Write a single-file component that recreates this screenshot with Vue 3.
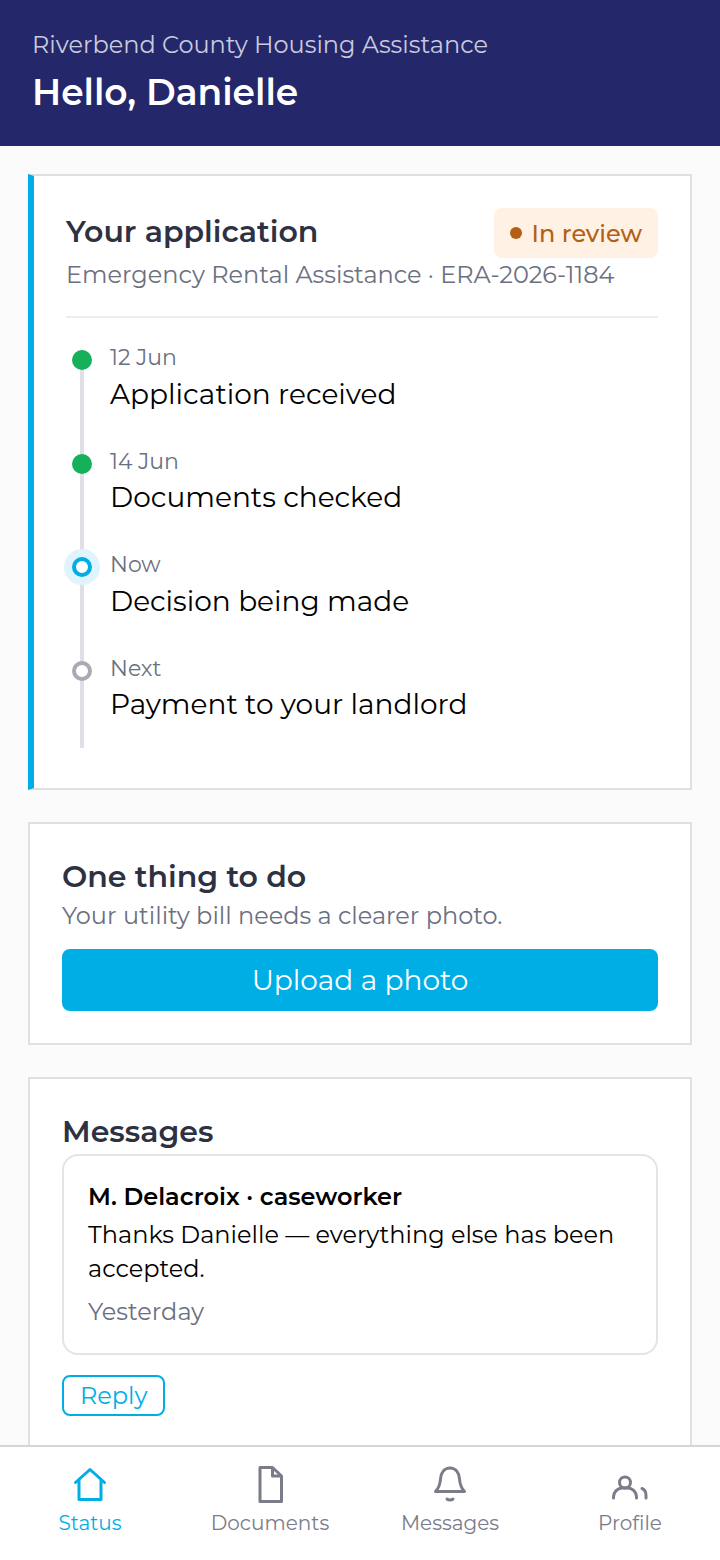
<template>
  <div class="screen">
    <header class="top">
      <p class="agency">Riverbend County Housing Assistance</p>
      <h1>Hello, Danielle</h1>
    </header>

    <main class="content">
      <section class="card card-app">
        <div class="app-head">
          <h2>Your application</h2>
          <span class="badge"><i></i>In review</span>
        </div>
        <p class="sub">Emergency Rental Assistance · ERA-2026-1184</p>
        <ol class="timeline">
          <li v-for="step in steps" :key="step.title" class="step">
            <span class="dot" :class="step.state"></span>
            <span class="when">{{ step.when }}</span>
            <span class="what">{{ step.title }}</span>
          </li>
        </ol>
      </section>

      <section class="card card-todo">
        <h2>One thing to do</h2>
        <p class="sub">Your utility bill needs a clearer photo.</p>
        <button class="primary">Upload a photo</button>
      </section>

      <section class="card card-msg">
        <h2>Messages</h2>
        <div class="message">
          <strong>M. Delacroix · caseworker</strong>
          <p>Thanks Danielle — everything else has been accepted.</p>
          <span>Yesterday</span>
        </div>
        <button class="reply">Reply</button>
      </section>
    </main>

    <nav class="tabs">
      <a class="tab active">
        <svg viewBox="0 0 36 36" fill="none" stroke="currentColor" stroke-width="3" stroke-linejoin="round" stroke-linecap="round">
          <path d="M3.500 16.500 18 3.500l14.500 13" />
          <path d="M7 14v19.500h22V14" />
        </svg>
        Status
      </a>
      <a class="tab">
        <svg viewBox="0 0 36 36" fill="none" stroke="currentColor" stroke-width="3" stroke-linejoin="round">
          <path d="M8 1.500h12.500l9 8.500v25.500H8z" />
          <path d="M20.500 1.500V10h9" />
        </svg>
        Documents
      </a>
      <a class="tab">
        <svg viewBox="0 0 36 36" fill="none" stroke="currentColor" stroke-width="3" stroke-linecap="round" stroke-linejoin="round">
          <path d="M3.500 25.500C7 22 8 19 8.500 13 9 6.500 12.500 2 18 2s9 4.500 9.500 11c.5 6 1.500 9 5 12.500z" />
          <path d="M15 33c1.500 1.300 4.500 1.300 6 0" />
        </svg>
        Messages
      </a>
      <a class="tab">
        <svg viewBox="0 0 36 36" fill="none" stroke="currentColor" stroke-width="3" stroke-linecap="round">
          <circle cx="13" cy="16.500" r="5.500" />
          <path d="M1.500 32v-1c0-5 4-9 9-9h5c5 0 9 4 9 9v1" />
          <path d="M30 22.500c2.800 1 4 4 4 7V32" />
        </svg>
        Profile
      </a>
    </nav>
  </div>
</template>

<script setup>
const steps = [
  { when: '12 Jun', title: 'Application received', state: 'done' },
  { when: '14 Jun', title: 'Documents checked', state: 'done' },
  { when: 'Now', title: 'Decision being made', state: 'now' },
  { when: 'Next', title: 'Payment to your landlord', state: 'next' }
]
</script>

<style>
html, body { margin: 0; }
</style>

<style scoped>
.screen {
  width: 720px;
  height: 1560px;
  display: flex;
  flex-direction: column;
  overflow: hidden;
  background: #fbfbfb;
  font-family: "Montserrat", "Inter", "Liberation Sans", sans-serif;
  color: #000;
}

.top {
  height: 146px;
  box-sizing: border-box;
  padding: 28px 32px 0;
  background: #24286b;
  color: #fff;
  flex: none;
}

.agency {
  margin: 0;
  font-size: 24px;
  line-height: 34px;
  color: #c9cade;
}

.top h1 {
  margin: 8px 0 0;
  font-size: 36px;
  line-height: 44px;
  font-weight: 600;
}

.content {
  flex: 1;
  min-height: 0;
  overflow: hidden;
  padding: 28px 28px 0;
  display: flex;
  flex-direction: column;
  gap: 32px;
}

.card {
  background: #fff;
  border: 2px solid #dfdfe5;
  box-sizing: border-box;
  flex: none;
}

.card h2 {
  margin: 0;
  font-size: 30px;
  line-height: 42px;
  font-weight: 600;
  color: #2d3142;
}

.sub {
  margin: 0;
  font-size: 24px;
  line-height: 32px;
  color: #6b7080;
}

.card-app {
  height: 616px;
  padding: 32px 32px 0;
  border-left: 6px solid #00aee6;
}

.app-head {
  display: flex;
  justify-content: space-between;
  align-items: flex-start;
  height: 50px;
}

.app-head h2 {
  margin-top: 3px;
}

.badge {
  display: flex;
  align-items: center;
  gap: 10px;
  height: 50px;
  box-sizing: border-box;
  padding: 0 16px;
  border-radius: 8px;
  background: #fff1e3;
  color: #b45f14;
  font-size: 24px;
  font-weight: 500;
}

.badge i {
  width: 12px;
  height: 12px;
  border-radius: 50%;
  background: #b45f14;
}

.card-app .sub {
  margin-top: 1px;
  padding-bottom: 25px;
  border-bottom: 2px solid #ededf0;
}

.timeline {
  list-style: none;
  margin: 24px 0 0;
  padding: 0;
}

.step {
  position: relative;
  height: 103.500px;
  padding-left: 44px;
  display: flex;
  flex-direction: column;
}

.step::before {
  content: "";
  position: absolute;
  left: 14px;
  top: 8px;
  bottom: -8px;
  width: 4px;
  background: #dfdfe5;
}

.step:last-child::before {
  bottom: 8px;
}

.dot {
  position: absolute;
  left: 6px;
  top: 8px;
  width: 20px;
  height: 20px;
  box-sizing: border-box;
  border-radius: 50%;
}

.dot.done { background: #16b05a; }

.dot.now {
  background: #fff;
  border: 4px solid #00aee6;
  box-shadow: 0 0 0 8px #dff4fc;
}

.dot.next {
  background: #fff;
  border: 4px solid #a9aab4;
}

.when {
  margin-top: 1px;
  font-size: 22px;
  line-height: 30px;
  color: #6b7080;
}

.what {
  margin-top: 1.900px;
  font-size: 28px;
  line-height: 38px;
}

.card-todo {
  height: 223px;
  padding: 32px 32px 0;
}

.card-todo .sub {
  margin-top: 2px;
}

.primary {
  display: block;
  width: 100%;
  height: 62px;
  margin-top: 17px;
  border: 0;
  border-radius: 8px;
  background: #00aee6;
  color: #fff;
  font: inherit;
  font-size: 28px;
}

.card-msg {
  padding: 32px 32px 40px;
}

.message {
  margin-top: 1px;
  padding: 24px;
  border: 2px solid #e4e4e8;
  border-radius: 16px;
  display: flex;
  flex-direction: column;
}

.message strong {
  font-size: 24px;
  line-height: 34px;
  font-weight: 600;
}

.message p {
  margin: 4px 0 0;
  font-size: 24px;
  line-height: 34px;
}

.message span {
  margin-top: 9px;
  font-size: 24px;
  line-height: 34px;
  color: #6b7080;
}

.reply {
  display: block;
  height: 41px;
  margin-top: 20px;
  padding: 0 16px;
  border: 2px solid #00aee6;
  border-radius: 8px;
  background: #fff;
  color: #00aee6;
  font: inherit;
  font-size: 24px;
}

.tabs {
  flex: none;
  height: 115px;
  box-sizing: border-box;
  border-top: 2px solid #d4d4d9;
  background: #fff;
  display: grid;
  grid-template-columns: repeat(4, 180px);
}

.tab {
  display: flex;
  flex-direction: column;
  align-items: center;
  padding-top: 19px;
  font-size: 20px;
  line-height: 26px;
  color: #7a7c8a;
}

.tab svg {
  width: 36px;
  height: 36px;
  margin-bottom: 8px;
  overflow: visible;
}

.tab.active { color: #00aee6; }
</style>
